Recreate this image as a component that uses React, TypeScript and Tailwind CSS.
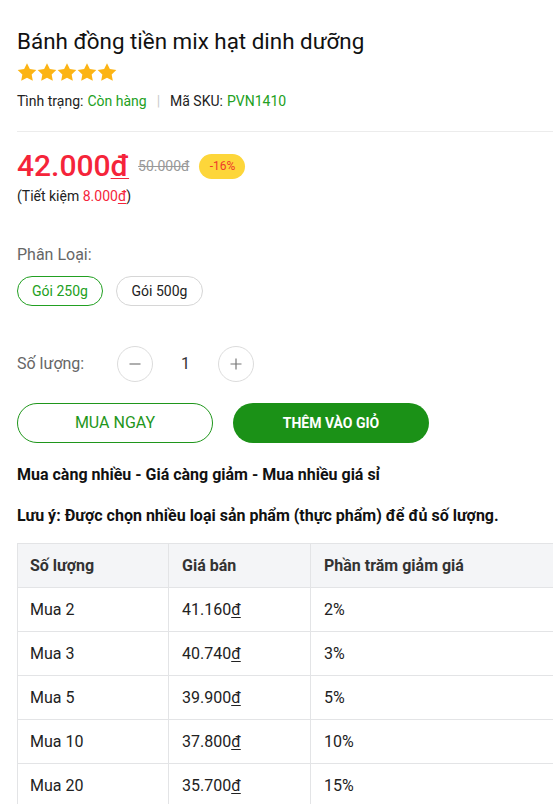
import React from "react";

const Star = () => (
  <svg width="20" height="18" viewBox="0 0 24 22" className="shrink-0">
    <path
      d="M12 0.3l3.5 7.1 7.9 1.1-5.7 5.5 1.4 7.8L12 18.1l-7.1 3.7 1.4-7.8L0.6 8.5l7.9-1.1z"
      fill="#fcb414"
    />
  </svg>
);

const Dong = ({ children }: { children: React.ReactNode }) => (
  <span className="underline decoration-1 underline-offset-2">{children}</span>
);

const rows = [
  ["Mua 2", "41.160", "2%"],
  ["Mua 3", "40.740", "3%"],
  ["Mua 5", "39.900", "5%"],
  ["Mua 10", "37.800", "10%"],
  ["Mua 20", "35.700", "15%"],
];

export default function App() {
  return (
    <div
      className="w-[553px] h-[804px] overflow-hidden bg-white text-[#222]"
      style={{ fontFamily: "Roboto, 'Noto Sans', sans-serif" }}
    >
      <div className="w-[640px] pl-[17px] pt-[28px]">
        <h1 className="text-[22.4px] leading-[26px] font-normal text-[#111]">
          Bánh đồng tiền mix hạt dinh dưỡng
        </h1>
        <div className="flex gap-0 mt-[9px] h-[18px] items-center">
          <Star />
          <Star />
          <Star />
          <Star />
          <Star />
        </div>
        <div className="mt-[10px] text-[14px] leading-[20px] text-[#222] flex items-center">
          <span>Tình trạng:</span>
          <span className="ml-1 text-[#22a022]">Còn hàng</span>
          <span className="mx-[10px] text-[#ccc]">|</span>
          <span>Mã SKU:</span>
          <span className="ml-1 text-[#22a022]">PVN1410</span>
        </div>
        <div className="mt-[20px] h-px bg-[#ececec] w-[536px]" />

        <div className="mt-[18px] flex items-center h-[32px]">
          <span className="text-[30px] leading-[32px] font-medium text-[#f5243a]">
            42.000<Dong>đ</Dong>
          </span>
          <span className="ml-[9px] text-[14px] text-[#999] line-through">
            50.000đ
          </span>
          <span className="ml-[10px] h-[25px] w-[46px] rounded-full bg-[#fdd63a] text-[#ee3a2a] text-[12px] flex items-center justify-center">
            -16%
          </span>
        </div>
        <div className="mt-[4px] text-[14px] leading-[20px] text-[#222]">
          (Tiết kiệm <span className="text-[#f5243a]">8.000<Dong>đ</Dong></span>)
        </div>

        <div className="mt-[38px] text-[16px] leading-[22px] text-[#666]">
          Phân Loại:
        </div>
        <div className="mt-[10px] flex gap-[13px]">
          <button className="h-[30px] w-[86px] rounded-full border border-[#22a022] text-[#22a022] text-[14px]">
            Gói 250g
          </button>
          <button className="h-[30px] w-[87px] rounded-full border border-[#d6d6d6] text-[#222] text-[14px]">
            Gói 500g
          </button>
        </div>

        <div className="mt-[40px] flex items-center h-[36px]">
          <span className="w-[100px] text-[16px] text-[#666]">Số lượng:</span>
          <button className="w-[36px] h-[36px] rounded-full border border-[#dcdcdc] flex items-center justify-center">
            <svg width="12" height="12" viewBox="0 0 12 12">
              <path d="M0.5 6h11" stroke="#777" strokeWidth="1.2" />
            </svg>
          </button>
          <span className="w-[65px] text-center text-[16px] text-[#333]">1</span>
          <button className="w-[36px] h-[36px] rounded-full border border-[#dcdcdc] flex items-center justify-center">
            <svg width="12" height="12" viewBox="0 0 12 12">
              <path d="M0.5 6h11M6 0.5v11" stroke="#777" strokeWidth="1.2" />
            </svg>
          </button>
        </div>

        <div className="mt-[21px] flex gap-[20px]">
          <button className="h-[40px] w-[196px] rounded-full border border-[#1f961b] text-[#1f961b] text-[16px]">
            MUA NGAY
          </button>
          <button className="h-[40px] w-[196px] rounded-full bg-[#1b9117] text-white text-[14px] font-bold">
            THÊM VÀO GIỎ
          </button>
        </div>

        <div className="mt-[21px] text-[16px] leading-[22px] font-bold text-[#111]">
          Mua càng nhiều - Giá càng giảm - Mua nhiều giá sỉ
        </div>
        <div className="mt-[19px] text-[16px] leading-[22px] font-bold text-[#111]">
          Lưu ý: Được chọn nhiều loại sản phẩm (thực phẩm) để đủ số lượng.
        </div>

        <table className="mt-[16px] w-[600px] border-collapse text-[16px]">
          <thead>
            <tr className="bg-[#f4f5f7] h-[44px]">
              <th className="w-[151px] border border-[#e3e4e6] text-left font-bold pl-[12px] text-[#333]">
                Số lượng
              </th>
              <th className="w-[142px] border border-[#e3e4e6] text-left font-bold pl-[13px] text-[#333]">
                Giá bán
              </th>
              <th className="border border-[#e3e4e6] text-left font-bold pl-[13px] text-[#333]">
                Phần trăm giảm giá
              </th>
            </tr>
          </thead>
          <tbody>
            {rows.map((r) => (
              <tr key={r[0]} className="h-[44px]">
                <td className="border border-[#e3e4e6] pl-[12px] text-[#222]">{r[0]}</td>
                <td className="border border-[#e3e4e6] pl-[13px] text-[#222]">
                  {r[1]}
                  <Dong>đ</Dong>
                </td>
                <td className="border border-[#e3e4e6] pl-[13px] text-[#222]">{r[2]}</td>
              </tr>
            ))}
          </tbody>
        </table>
      </div>
    </div>
  );
}
